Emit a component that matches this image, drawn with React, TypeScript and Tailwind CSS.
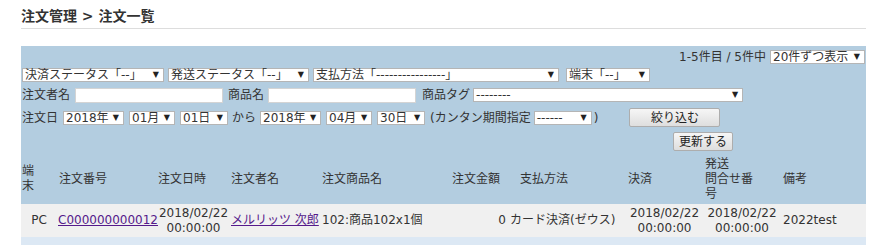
import React from 'react'

function Sel({ label, w }: { label: string; w: string }) {
  return (
    <div className={'flex h-[14px] items-center justify-between border border-[#b5b5b5] bg-white pl-[2px] pr-[4px] leading-none ' + w}>
      <span className="whitespace-nowrap">{label}</span>
      <span className="text-[8px] text-[#222]">▼</span>
    </div>
  )
}

function Input({ w }: { w: string }) {
  return <div className={'h-[15px] border border-[#d4d4d4] bg-white ' + w}></div>
}

const Btn = ({ children, w }: { children: React.ReactNode; w: string }) => (
  <button className={'flex h-[19px] items-center justify-center rounded-[2px] border border-[#adadad] bg-gradient-to-b from-[#f6f6f6] to-[#dedede] text-[12px] text-[#222] ' + w}>
    {children}
  </button>
)

export default function App() {
  return (
    <div className="min-h-screen bg-white pl-[21px] pr-[13px] pt-[7px] text-[12px] text-[#333]" style={{ fontFamily: '"DejaVu Sans", "Noto Sans CJK JP", sans-serif' }}>
      <h1 className="text-[14px] font-bold leading-[18px] text-[#333]">注文管理 &gt; 注文一覧</h1>
      <div className="mt-[3px] h-px bg-[#dddddd]"></div>

      <div className="mt-[17px] w-[845px] bg-[#b3cde0]">
        <div className="flex h-[19px] items-center justify-end gap-[4px] pr-[1px] pt-[2px]">
          <span>1-5件目 / 5件中</span>
          <Sel label="20件ずつ表示" w="w-[95px]" />
        </div>

        <div className="flex h-[20px] items-center pl-[1px]">
          <Sel label="決済ステータス「--」" w="w-[142px]" />
          <div className="w-[4px]"></div>
          <Sel label="発送ステータス「--」" w="w-[141px]" />
          <div className="w-[4px]"></div>
          <Sel label="支払方法「----------------」" w="w-[246px]" />
          <div className="w-[7px]"></div>
          <Sel label="端末「--」" w="w-[84px]" />
        </div>

        <div className="flex h-[20px] items-center pl-[1px]">
          <span>注文者名</span>
          <div className="w-[5px]"></div>
          <Input w="w-[148px]" />
          <span className="ml-[5px]">商品名</span>
          <div className="w-[4px]"></div>
          <Input w="w-[148px]" />
          <span className="ml-[6px]">商品タグ</span>
          <div className="w-[3px]"></div>
          <Sel label="--------" w="w-[270px]" />
        </div>

        <div className="flex h-[24px] items-center pl-[1px] pt-[1px]">
          <span>注文日</span>
          <div className="w-[5px]"></div>
          <Sel label="2018年" w="w-[61px]" />
          <div className="w-[5px]"></div>
          <Sel label="01月" w="w-[46px]" />
          <div className="w-[5px]"></div>
          <Sel label="01日" w="w-[48px]" />
          <span className="mx-[4px]">から</span>
          <Sel label="2018年" w="w-[61px]" />
          <div className="w-[5px]"></div>
          <Sel label="04月" w="w-[46px]" />
          <div className="w-[5px]"></div>
          <Sel label="30日" w="w-[48px]" />
          <span className="ml-[5px] mr-[3px]">(カンタン期間指定</span>
          <Sel label="------" w="w-[58px]" />
          <span className="ml-[2px]">)</span>
          <div className="w-[31px]"></div>
          <Btn w="w-[91px]">絞り込む</Btn>
        </div>

        <div className="flex h-[25px] items-start pl-[652px] pt-[3px]">
          <Btn w="w-[60px]">更新する</Btn>
        </div>

        <table className="w-[845px] table-fixed border-collapse">
          <colgroup>
            <col className="w-[36px]" />
            <col className="w-[100px]" />
            <col className="w-[73px]" />
            <col className="w-[91px]" />
            <col className="w-[129px]" />
            <col className="w-[58px]" />
            <col className="w-[118px]" />
            <col className="w-[77px]" />
            <col className="w-[78px]" />
            <col className="w-[85px]" />
          </colgroup>
          <thead>
            <tr className="h-[50px] text-left align-middle leading-[15px]">
              <th className="px-[1px] font-normal">端<br />末</th>
              <th className="px-[2px] font-normal">注文番号</th>
              <th className="px-[1px] font-normal">注文日時</th>
              <th className="px-[1px] font-normal">注文者名</th>
              <th className="px-[1px] font-normal">注文商品名</th>
              <th className="px-[2px] font-normal">注文金額</th>
              <th className="pl-[12px] font-normal">支払方法</th>
              <th className="px-[2px] font-normal">決済</th>
              <th className="px-[2px] font-normal">発送<br />問合せ番<br />号</th>
              <th className="px-[2px] font-normal">備考</th>
            </tr>
          </thead>
          <tbody>
            <tr className="h-[33px] bg-[#f0f0f0] leading-[15px]">
              <td className="text-center">PC</td>
              <td className="whitespace-nowrap px-[1px]"><a href="#" className="text-[#551a8b] underline">C000000000012</a></td>
              <td className="text-center">2018/02/22<br />00:00:00</td>
              <td className="whitespace-nowrap px-[1px]"><a href="#" className="text-[#551a8b] underline">メルリッツ 次郎</a></td>
              <td className="px-[1px]">102:商品102x1個</td>
              <td className="pr-[2px] text-right">0</td>
              <td className="whitespace-nowrap px-[2px]">カード決済(ゼウス)</td>
              <td className="text-center">2018/02/22<br />00:00:00</td>
              <td className="text-center">2018/02/22<br />00:00:00</td>
              <td className="px-[2px]">2022test</td>
            </tr>
            <tr className="h-[20px] bg-[#dce8f4]">
              <td colSpan={10}></td>
            </tr>
          </tbody>
        </table>
      </div>
    </div>
  )
}
